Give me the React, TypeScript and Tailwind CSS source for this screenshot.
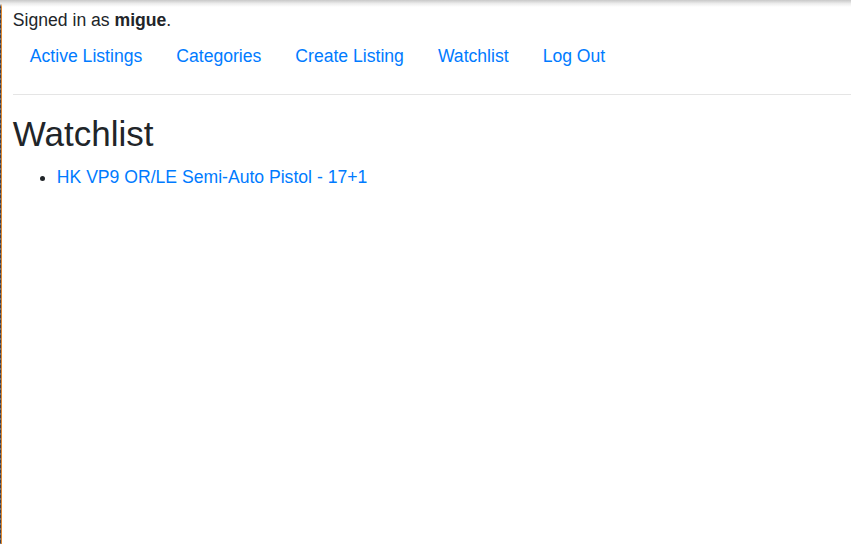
import React from "react";

export default function App() {
  const links = ["Active Listings", "Categories", "Create Listing", "Watchlist", "Log Out"];
  return (
    <div className="relative flex w-[851px] h-[544px] overflow-hidden bg-white font-['Liberation_Sans',Arial,sans-serif] text-[#212529] text-[17.6px] leading-[1.5]">
      <div className="w-[1px] h-full bg-[repeating-linear-gradient(to_bottom,#3b4150_0px,#3b4150_3px,#6b7280_3px,#6b7280_5px)]" />
      <div className="w-[1px] h-full bg-[#e0892f]" />
      <div className="absolute left-0 top-0 w-full h-[7px] bg-gradient-to-b from-[#c8c8c8] via-[#ececec] to-transparent pointer-events-none" />
      <div className="flex-1 flex flex-col pl-[10.8px] pt-[7px]">
        <div>
          Signed in as <strong className="font-bold">migue</strong>.
        </div>
        <ul className="flex">
          {links.map((l) => (
            <li key={l}>
              <a className="block px-[17px] pt-[9.8px] pb-[7.8px] text-[#007bff]" href="#">
                {l}
              </a>
            </li>
          ))}
        </ul>
        <hr className="mt-[16.6px] mb-[17.6px] border-0 border-t border-[rgba(0,0,0,0.1)]" />
        <h2 className="text-[35px] leading-[1.2] font-normal mb-[9.8px]">Watchlist</h2>
        <ul className="list-disc pl-[44px]">
          <li>
            <a className="text-[#007bff]" href="#">HK VP9 OR/LE Semi-Auto Pistol - 17+1</a>
          </li>
        </ul>
      </div>
    </div>
  );
}
